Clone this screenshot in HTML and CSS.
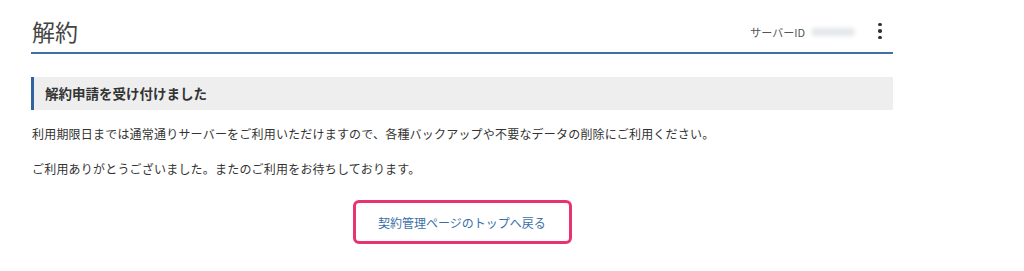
FILE: index.html
```html
<!DOCTYPE html>
<html lang="ja">
<head>
    <meta charset="UTF-8">
    <title>解約</title>
    <link rel="stylesheet" href="styles.css">
</head>
<body>
<div class="page">
    <header class="page-header">
        <h1 class="page-title">解約</h1>
        <div class="server-info">
            <span class="server-label">サーバーID</span>
            <span class="server-id"></span>
        </div>
        <button class="menu-button" aria-label="メニュー">
            <span class="dot"></span>
            <span class="dot"></span>
            <span class="dot"></span>
        </button>
    </header>

    <section class="notice">
        <h2 class="notice-title">解約申請を受け付けました</h2>
    </section>

    <p class="message">利用期限日までは通常通りサーバーをご利用いただけますので、各種バックアップや不要なデータの削除にご利用ください。</p>
    <p class="message">ご利用ありがとうございました。またのご利用をお待ちしております。</p>

    <div class="actions">
        <a class="back-link" href="#">契約管理ページのトップへ戻る</a>
    </div>
</div>
</body>
</html>
```

FILE: styles.css
```css
body {
    margin: 0;
    background-color: #fff;
    color: #333;
    font-family: "Noto Sans CJK JP", "Noto Sans", sans-serif;
}

.page {
    width: 862px;
    margin-left: 31px;
}

/* Header */
.page-header {
    display: flex;
    align-items: center;
    height: 42px;
    padding-top: 10px;
    border-bottom: 2px solid #3f6fa6;
}

.page-title {
    margin: 0 0 0 1px;
    font-size: 23px;
    font-weight: 400;
    color: #444;
    flex: 1;
}

.server-info {
    display: flex;
    align-items: center;
    gap: 6px;
    margin-top: 2px;
}

.server-label {
    font-size: 11px;
    color: #555;
}

.server-id {
    display: block;
    width: 44px;
    height: 8px;
    background-color: #e4e6ea;
    border-radius: 4px;
    filter: blur(2px);
}

.menu-button {
    display: flex;
    flex-direction: column;
    align-items: center;
    gap: 3px;
    width: 14px;
    margin: 0 6px 0 18px;
    padding: 0;
    background: none;
    border: none;
    cursor: pointer;
}

.dot {
    display: block;
    width: 3.5px;
    height: 3.5px;
    border-radius: 50%;
    background-color: #333;
}

/* Notice */
.notice {
    margin-top: 23px;
    background-color: #eeeeee;
    border-left: 3px solid #2f62a0;
    padding-left: 11px;
}

.notice-title {
    margin: 0;
    font-size: 13.5px;
    line-height: 33px;
    font-weight: 700;
    color: #333;
}

/* Messages */
.message {
    margin: 15px 0 0 1px;
    font-size: 12px;
    line-height: 18px;
    letter-spacing: 0.2px;
    color: #333;
}

.message + .message {
    margin-top: 17px;
}

/* Back button */
.actions {
    display: flex;
    justify-content: center;
    margin-top: 22px;
}

.back-link {
    display: flex;
    align-items: center;
    justify-content: center;
    box-sizing: border-box;
    width: 219px;
    height: 44px;
    border: 3px solid #e8336e;
    border-radius: 6px;
    font-size: 12px;
    color: #3b6fa8;
    text-decoration: none;
}
```
